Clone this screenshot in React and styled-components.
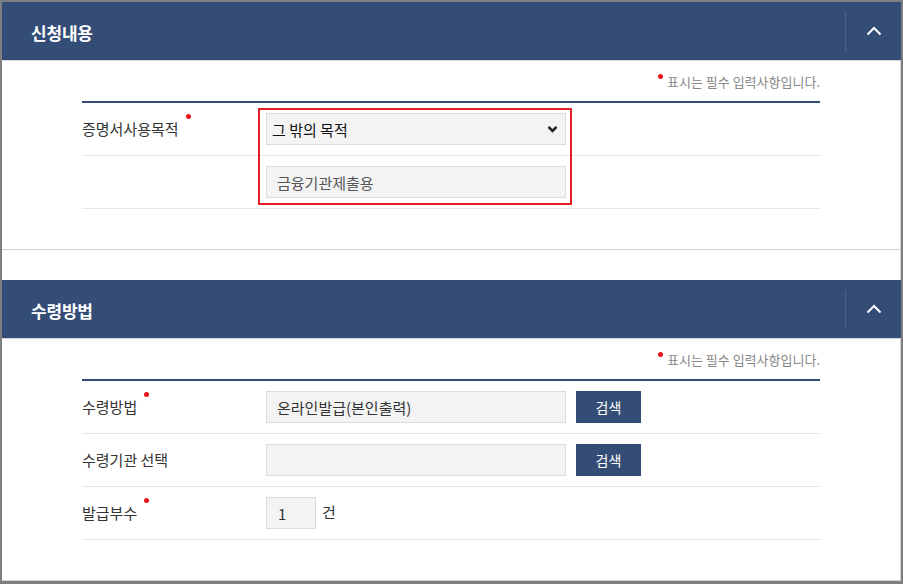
import React from "react";
import styled, { createGlobalStyle } from "styled-components";

const GlobalStyle = createGlobalStyle`
    html, body {
        margin: 0;
        padding: 0;
        background: #fff;
    }
    body {
        font-family: "Noto Sans CJK KR", "Noto Sans", sans-serif;
        color: #333;
    }
    * {
        box-sizing: border-box;
    }
`;

const NAVY = "#344d77";

function ChevronUp() {
    return (
        <svg width="16" height="10" viewBox="0 0 16 10">
            <polyline points="1.5,8.5 8,2 14.5,8.5" fill="none" stroke="#fff" strokeWidth="2" />
        </svg>
    );
}

function ChevronDown() {
    return (
        <svg width="11" height="8" viewBox="0 0 11 8">
            <polyline points="1.5,1.8 5.5,5.8 9.5,1.8" fill="none" stroke="#222" strokeWidth="2.6" />
        </svg>
    );
}

function Panel({ title, children, last }) {
    return (
        <Section $last={last}>
            <Header>
                <Title>{title}</Title>
                <Toggle type="button" aria-label="접기">
                    <ChevronUp />
                </Toggle>
            </Header>
            <Body>
                <Note>
                    <NoteDot />
                    표시는 필수 입력사항입니다.
                </Note>
                {children}
            </Body>
        </Section>
    );
}

function Label({ text, required }) {
    return (
        <LabelCell>
            {text}
            {required && <ReqDot />}
        </LabelCell>
    );
}

export default function App() {
    return (
        <>
            <GlobalStyle />
            <Frame>
                <Panel title="신청내용">
                    <Table>
                        <Row>
                            <Label text="증명서사용목적" required />
                            <Field>
                                <SelectWrap>
                                    <Select defaultValue="etc">
                                        <option value="etc">그 밖의 목적</option>
                                    </Select>
                                    <SelectArrow>
                                        <ChevronDown />
                                    </SelectArrow>
                                </SelectWrap>
                            </Field>
                        </Row>
                        <Row>
                            <Label text="" />
                            <Field>
                                <TextInput defaultValue="금융기관제출용" $tone="#555" />
                            </Field>
                        </Row>
                        <Highlight />
                    </Table>
                </Panel>
                <Panel title="수령방법" last>
                    <Table>
                        <Row>
                            <Label text="수령방법" required />
                            <Field>
                                <TextInput defaultValue="온라인발급(본인출력)" readOnly />
                                <SearchButton type="button">검색</SearchButton>
                            </Field>
                        </Row>
                        <Row>
                            <Label text="수령기관 선택" />
                            <Field>
                                <TextInput defaultValue="" readOnly />
                                <SearchButton type="button">검색</SearchButton>
                            </Field>
                        </Row>
                        <Row>
                            <Label text="발급부수" required />
                            <Field>
                                <CountInput defaultValue="1" />
                                <Unit>건</Unit>
                            </Field>
                        </Row>
                    </Table>
                </Panel>
            </Frame>
        </>
    );
}

const Frame = styled.div`
    height: 584px;
    border: 2px solid #7f7f7f;
    border-bottom-width: 3px;
    box-shadow: inset -1px -1px 0 #d2d2d2;
    overflow: hidden;
`;

const Section = styled.section`
    padding-bottom: ${(p) => (p.$last ? 0 : 40)}px;
    border-bottom: ${(p) => (p.$last ? "none" : "1px solid #d4d4d4")};
    margin-bottom: ${(p) => (p.$last ? 0 : 30)}px;
`;

const Header = styled.div`
    display: flex;
    align-items: center;
    height: 59px;
    padding-left: 29px;
    background: ${NAVY};
    border-bottom: 1px solid #d6d6d6;
`;

const Title = styled.h2`
    margin: 0 0 -2px 0;
    color: #fff;
    font-size: 17px;
    font-weight: 700;
    letter-spacing: -0.2px;
`;

const Toggle = styled.button`
    margin-left: auto;
    width: 56px;
    height: 39px;
    display: flex;
    align-items: center;
    justify-content: center;
    padding: 0;
    background: none;
    border: none;
    border-left: 1px solid #4d638b;
    cursor: pointer;
`;

const Body = styled.div`
    padding: 0 81px 0 80px;
`;

const Note = styled.p`
    margin: 0;
    height: 40px;
    display: flex;
    align-items: center;
    justify-content: flex-end;
    font-size: 13px;
    color: #888;
`;

const NoteDot = styled.span`
    width: 5px;
    height: 5px;
    border-radius: 50%;
    background: #e8131b;
    margin: -10px 4px 0 0;
`;

const Table = styled.div`
    position: relative;
    border-top: 2px solid ${NAVY};
`;

const Row = styled.div`
    display: flex;
    align-items: center;
    height: 53px;
    border-bottom: 1px solid #e6e6e6;
`;

const LabelCell = styled.div`
    width: 184px;
    display: flex;
    align-items: flex-start;
    font-size: 15px;
    line-height: 20px;
    color: #333;
`;

const ReqDot = styled.span`
    width: 5px;
    height: 5px;
    margin: -5px 0 0 7px;
    border-radius: 50%;
    background: #e8131b;
`;

const Field = styled.div`
    display: flex;
    align-items: center;
    gap: 10px;
`;

const SelectWrap = styled.div`
    position: relative;
    width: 300px;
    height: 32px;
`;

const Select = styled.select`
    appearance: none;
    width: 100%;
    height: 100%;
    padding: 0 30px 0 5px;
    border: 1px solid #dcdcdc;
    background: #f3f3f3;
    font-family: inherit;
    font-size: 15px;
    color: #111;
    outline: none;
`;

const SelectArrow = styled.span`
    position: absolute;
    right: 8px;
    top: 12px;
    display: flex;
    pointer-events: none;
`;

const TextInput = styled.input`
    width: 300px;
    height: 32px;
    padding: 0 10px;
    border: 1px solid #dcdcdc;
    background: #f3f3f3;
    font-family: inherit;
    font-size: 15px;
    color: ${(p) => p.$tone || "#333"};
    outline: none;
`;

const SearchButton = styled.button`
    width: 65px;
    height: 32px;
    border: none;
    background: ${NAVY};
    color: #fff;
    font-family: inherit;
    font-size: 14px;
    cursor: pointer;
`;

const CountInput = styled.input`
    width: 50px;
    height: 32px;
    padding: 0 11px;
    border: 1px solid #dcdcdc;
    background: #f3f3f3;
    font-family: inherit;
    font-size: 15px;
    color: #333;
    outline: none;
`;

const Unit = styled.span`
    margin: 0 0 4px -4px;
    font-size: 15px;
    color: #333;
`;

const Highlight = styled.div`
    position: absolute;
    top: 5px;
    left: 176px;
    width: 314px;
    height: 97px;
    border: 2px solid #e41e26;
    pointer-events: none;
`;
